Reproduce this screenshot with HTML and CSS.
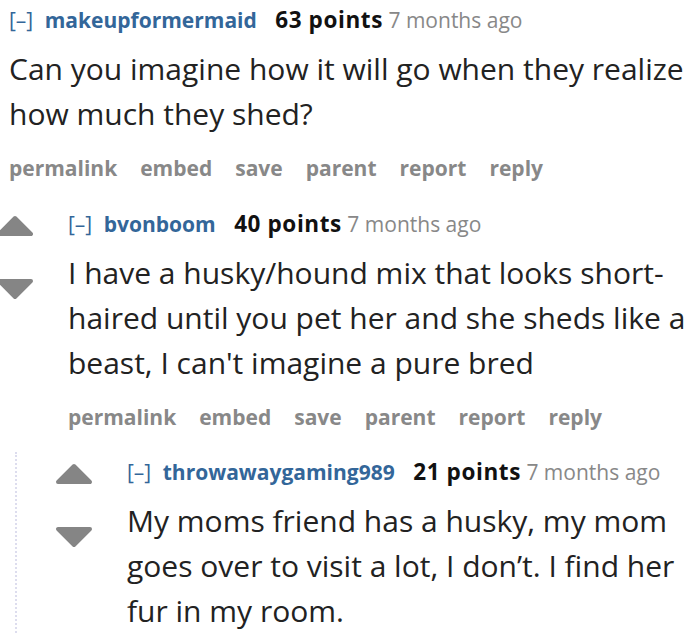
FILE: index.html
```html
<!DOCTYPE html>
<html>
<head>
<meta charset="utf-8">
<link rel="stylesheet" href="styles.css">
</head>
<body>
<div class="comment top">
  <div class="entry">
    <p class="tagline"><span class="expand">[–]</span> <a class="author">makeupformermaid</a> <span class="score">63 points</span> <span class="time">7 months ago</span></p>
    <div class="md">Can you imagine how it will go when they realize how much they shed?</div>
    <ul class="buttons"><li>permalink</li><li>embed</li><li>save</li><li>parent</li><li>report</li><li>reply</li></ul>
  </div>
  <div class="comment c2">
    <div class="midcol">
      <svg class="arrow up" viewBox="0 0 40 22"><polygon points="20,3 36,19 4,19"/></svg>
      <svg class="arrow down" viewBox="0 0 40 22"><polygon points="4,3 36,3 20,19"/></svg>
    </div>
    <div class="entry">
      <p class="tagline"><span class="expand">[–]</span> <a class="author">bvonboom</a> <span class="score">40 points</span> <span class="time">7 months ago</span></p>
      <div class="md">I have a husky/hound mix that looks short-haired until you pet her and she sheds like a beast, I can't imagine a pure bred</div>
      <ul class="buttons"><li>permalink</li><li>embed</li><li>save</li><li>parent</li><li>report</li><li>reply</li></ul>
    </div>
  </div>
  <div class="child">
    <div class="comment c3">
      <div class="midcol">
        <svg class="arrow up" viewBox="0 0 40 22"><polygon points="20,3 36,19 4,19"/></svg>
        <svg class="arrow down" viewBox="0 0 40 22"><polygon points="4,3 36,3 20,19"/></svg>
      </div>
      <div class="entry">
        <p class="tagline"><span class="expand">[–]</span> <a class="author">throwawaygaming989</a> <span class="score">21 points</span> <span class="time">7 months ago</span></p>
        <div class="md">My moms friend has a husky, my mom goes over to visit a lot, I don’t. I find her fur in my room.</div>
      </div>
    </div>
  </div>
</div>
</body>
</html>
```

FILE: styles.css
```css
html, body {
  margin: 0;
  padding: 0;
  background: #fff;
}
body {
  font-family: "Open Sans", "Noto Sans", sans-serif;
  color: #222;
  width: 700px;
  height: 639px;
  overflow: hidden;
}
.comment.top {
  padding-left: 9px;
}
.entry {
  min-width: 0;
}
.tagline {
  margin: 0;
  font-size: 21px;
  line-height: 40px;
  color: #888;
  white-space: nowrap;
}
.expand {
  color: #369;
  font-weight: normal;
  margin-right: 6px;
}
.author {
  color: #369;
  font-weight: bold;
  margin-right: 13px;
}
.score {
  color: #111;
  font-weight: bold;
  font-size: 22.5px;
  letter-spacing: 0.6px;
}
.time {
  color: #888;
}
.md {
  margin-top: 6px;
  font-size: 30px;
  line-height: 45px;
  color: #222;
}
.buttons {
  list-style: none;
  margin: 0;
  padding: 18px 0 0 0;
  display: flex;
  gap: 23px;
  font-size: 21px;
  font-weight: bold;
  color: #888;
  line-height: 28px;
}
.comment.c2, .comment.c3 {
  display: flex;
}
.comment.c2 {
  margin-left: -14px;
  margin-top: 22px;
}
.midcol {
  width: 73px;
  flex: none;
  display: flex;
  flex-direction: column;
  gap: 41px;
  padding-top: 11px;
}
.arrow {
  width: 40px;
  height: 22px;
  display: block;
  fill: #858585;
  stroke: #858585;
  stroke-width: 4;
  stroke-linejoin: round;
}
.child {
  margin-left: 6px;
  margin-top: 21px;
  border-left: 2px dotted #dde;
}
.comment.c3 {
  margin-left: 37px;
}
```
